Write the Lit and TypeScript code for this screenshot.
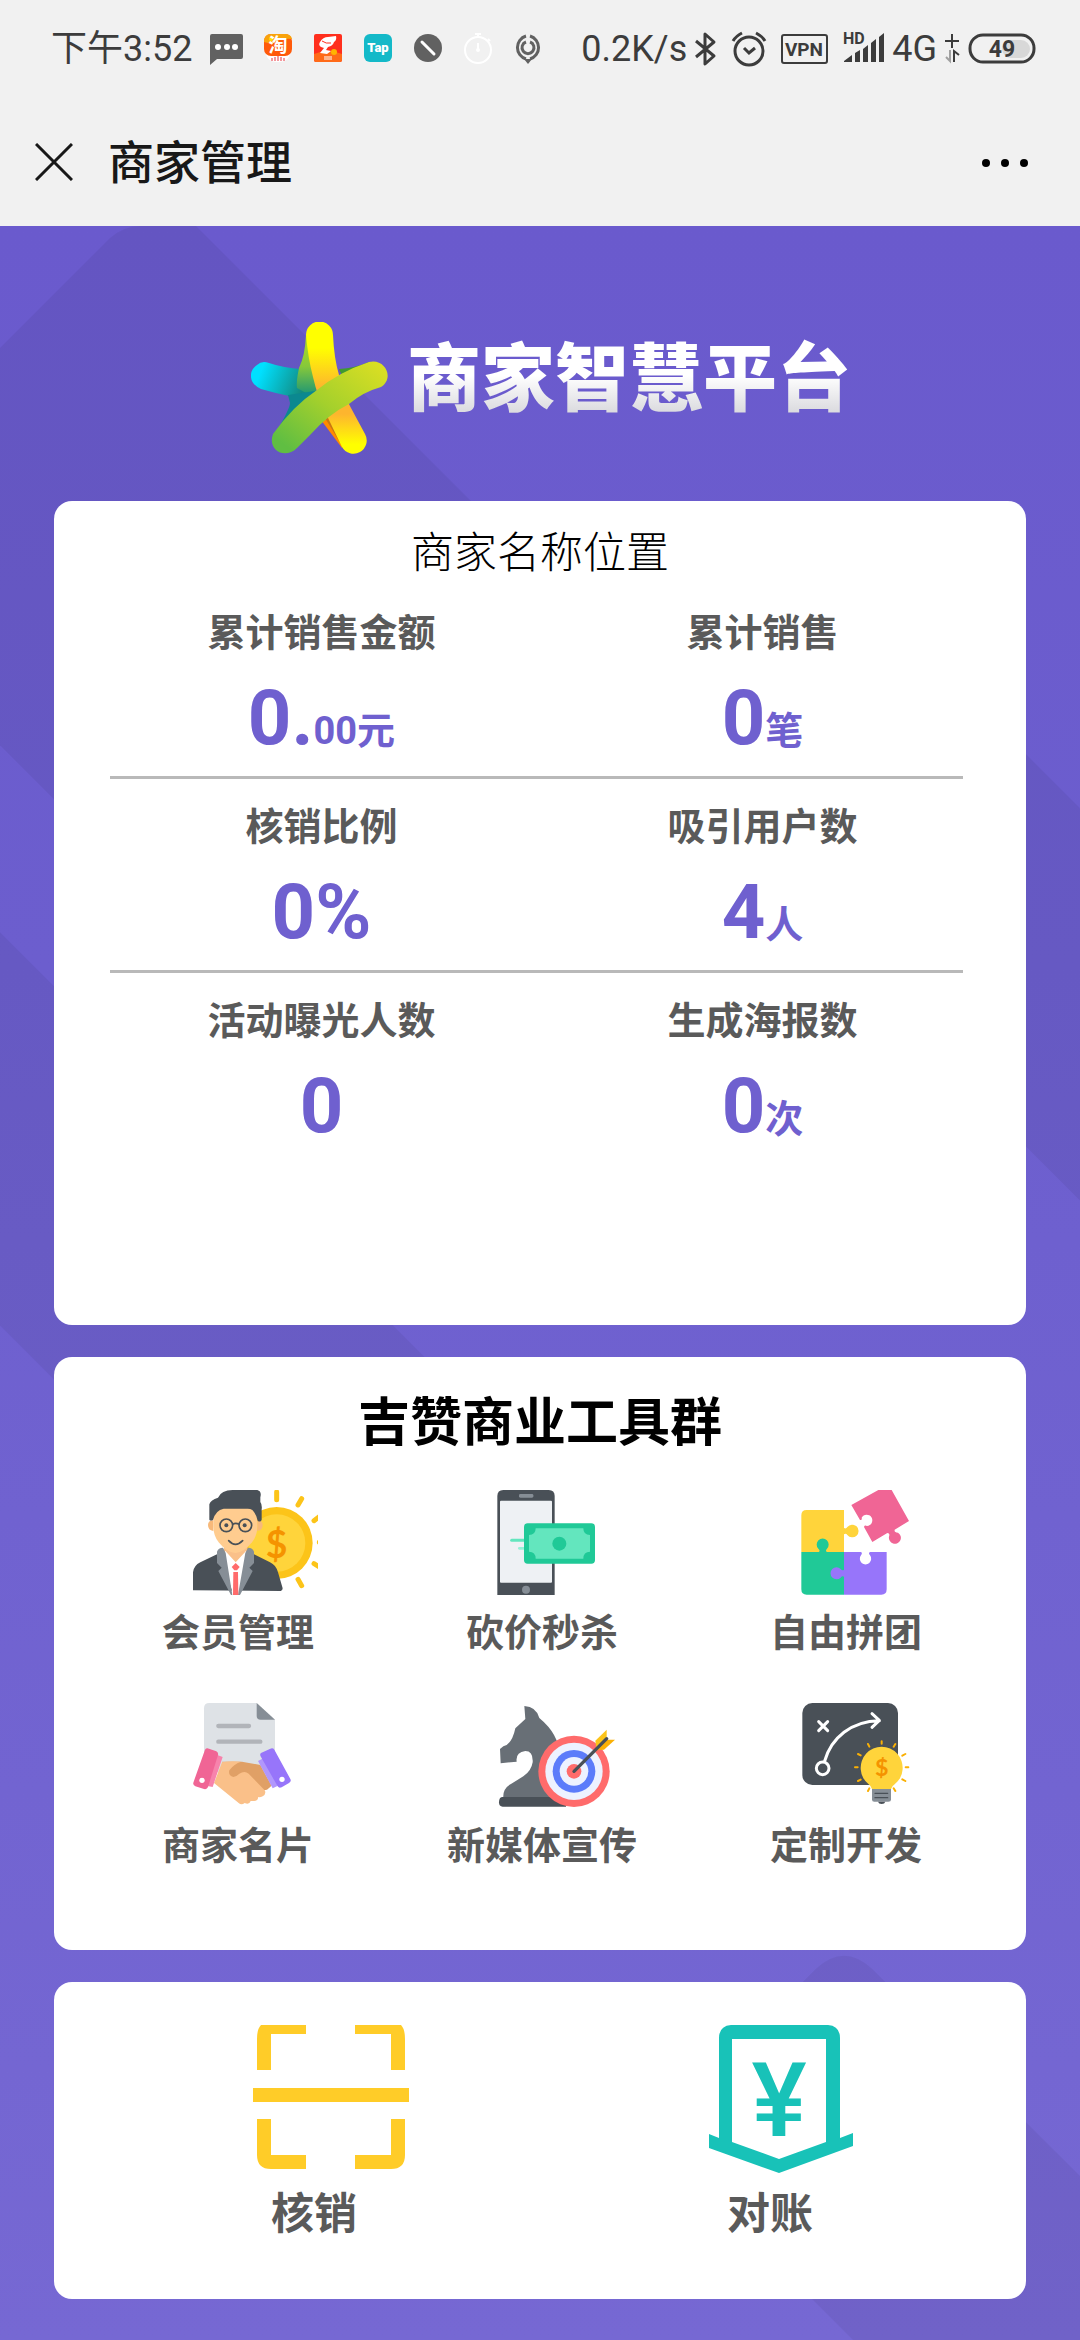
import { LitElement, html, svg, css } from "lit";
import type { SVGTemplateResult, TemplateResult } from "lit";
import { customElement, property } from "lit/decorators.js";

interface Stat {
  label: string;
  value: string;
  unit: string;
}

interface Action {
  label: string;
  icon: TemplateResult;
}

const STAT_ROWS: Stat[][] = [
  [
    { label: "累计销售金额", value: "0.", unit: "00元" },
    { label: "累计销售", value: "0", unit: "笔" },
  ],
  [
    { label: "核销比例", value: "0%", unit: "" },
    { label: "吸引用户数", value: "4", unit: "人" },
  ],
  [
    { label: "活动曝光人数", value: "0", unit: "" },
    { label: "生成海报数", value: "0", unit: "次" },
  ],
];

const dollar = (x: number, y: number, size: number): SVGTemplateResult =>
  svg`<text x=${x} y=${y} font-size=${size} font-family="Lato, Roboto, sans-serif" font-weight="700" fill="#f59300" text-anchor="middle">$</text>`;

const memberIcon = html`<svg viewBox="99 363 375 315" aria-hidden="true">
  <g stroke="#fcc419" stroke-width="15" stroke-linecap="round">
    <path d="M350 369V392M425 389L414 408M425 650L414 631M484 438L462 455M484 597L462 584M492 520H478" />
  </g>
  <circle cx="350" cy="522" r="108" fill="#fcc419" />
  <circle cx="350" cy="522" r="86" fill="#ffd43b" />
  ${dollar(350, 566, 112)}
  <path d="M144 468q0-14 16-14v32q-16-2-16-18zM308 468q0-14-16-14v32q16-2 16-18z" fill="#f7b97a" />
  <path d="M192 520h70v50l-35 30-35-30z" fill="#fac089" />
  <path d="M160 440q8-30 66-30t66 30v32q0 28-16 48-26 32-50 32t-50-32q-16-20-16-48z" fill="#ffcc8f" />
  <path d="M148 452V406q4-14 26-20 10-23 44-23h74q14 4 9 22v14q6 8 4 22l0 32q-4 8-12 2-4-20-16-32-6-4-14-4h-72q-24 4-32 34-8 4-11-1z" fill="#495057" />
  <g fill="none" stroke="#495057" stroke-width="5">
    <circle cx="199" cy="469" r="19" /><circle cx="256" cy="469" r="19" />
    <path d="M218 466q9-6 19 0" />
    <path d="M206 515q20 22 42 0" stroke-linecap="round" />
  </g>
  <circle cx="199" cy="469" r="6" fill="#495057" /><circle cx="254" cy="469" r="6" fill="#495057" />
  <path d="M99 664V610q2-20 22-30l50-24 56 50 55-50 48 24q18 8 24 30l14 48q0 6-6 8z" fill="#495057" />
  <path d="M196 546l31 34 31-34 10 20-34 112h-14l-36-112z" fill="#fff" />
  <path d="M171 548q4-12 18-12l8 16 20 126h-4l-38-72 10-10-14-14zM282 548q-4-12-18-12l-8 16-22 126h6l38-72-10-10 14-14z" fill="#868e96" />
  <path d="M227 582l12 12-8 10h-8l-8-10z" fill="#ff6b6b" />
  <path d="M220 609h14l1 69h-16z" fill="#ff6b6b" />
</svg>`;

const phoneIcon = html`<svg viewBox="171 93 375 315" aria-hidden="true">
  <path d="M190 93h136q18 0 18 18v297h-172V111q0-18 18-18z" fill="#495057" />
  <rect x="237" y="105" width="43" height="11" rx="4" fill="#868e96" />
  <rect x="180" y="125" width="156" height="246" rx="3" fill="#eef1f4" />
  <circle cx="258" cy="392" r="12" fill="#868e96" />
  <path d="M215 244h40" stroke="#63e6be" stroke-width="9" stroke-linecap="round" />
  <path d="M238 268h18" stroke="#96f2d7" stroke-width="8" stroke-linecap="round" />
  <rect x="252" y="193" width="213" height="121" rx="11" fill="#20c997" />
  <path d="M287 208h143q0 20 20 20v50q-20 0-20 21H287q0-21-20-21v-50q20 0 20-20z" fill="#63e6be" />
  <circle cx="358" cy="254" r="21" fill="#20c997" />
</svg>`;

const puzzleIcon = html`<svg viewBox="183 93 375 315" aria-hidden="true">
  <path d="M200 153h112v54q6 4 10-3a19 19 0 1 1 0 24q-4-6-10-2v53H184V169q0-16 16-16z" fill="#ffd43b" />
  <path d="M184 279h52q6-4-1-10a18 18 0 1 1 26 0q-6 6 0 10h51v128H200q-16 0-16-16z" fill="#20c997" />
  <path d="M312 279h52q4 6-1 10a17 17 0 1 0 27 0q-6-5-1-10h51v112q0 16-16 16H312v-54q-6-3-10 3a18 18 0 1 1 0-26q5 6 10 2z" fill="#9775fa" />
  <path d="M334 138L415 93h40l52 93-43 26q-2 8 10 9a18 18 0 1 1-27 12q4-11-5-11l-45 27-25-45q2-7 9-3a17 17 0 1 0-16-25q2 9-5 7z" fill="#f06595" />
</svg>`;

const dealIcon = html`<svg viewBox="99 72 375 315" aria-hidden="true">
  <path d="M148 72h142l55 50v158H132V88q0-16 16-16z" fill="#dee2e6" />
  <path d="M290 72l55 50h-43q-12 0-12-12z" fill="#868e96" />
  <path d="M175 141h92M175 188h126" stroke="#b1b4b9" stroke-width="13" stroke-linecap="round" />
  <path d="M186 248h60l55 10 34 62-14 12-60 10-60-60z" fill="#e0a066" />
  <path d="M186 250q26-6 58-2-22 6-36 26-4 16 12 20 8 0 18-10 16-10 28 0l48 50q6 10-6 18-8 4-14 2 2 14-22 12-4 12-18 6-10 8-18 0l-74-60z" fill="#fac089" />
  <path d="M170 227l18 7-30 90-16-3z" fill="#f783ac" />
  <path d="M135 212q4-6 12-3l22 8q7 4 5 11l-30 96q-3 8-12 6l-26-8q-8-4-6-11z" fill="#f06595" />
  <circle cx="126" cy="304" r="8" fill="#fff" />
  <path d="M294 246l16-8 44 82-16 8z" fill="#b197fc" />
  <path d="M303 222l28-13q8-3 12 3l48 88q4 7-4 12l-22 13q-8 4-12-3l-50-88q-5-8 0-12z" fill="#9775fa" />
  <circle cx="366" cy="301" r="8" fill="#fff" />
</svg>`;

const strategyIcon = html`<svg viewBox="171 732 375 315" aria-hidden="true">
  <path d="M190 1016q-2-28 24-42l36-22q24-16 28-42 2-34-22-34-30 4-26 32l-48 5-2-43 10-8q26-6 36-54l30-28-3-39q36 2 45 36 60 50 60 110v129z" fill="#686f76" />
  <path d="M188 1014h190v29H188q-11 0-11-13 0-16 11-16z" fill="#495057" />
  <circle cx="402" cy="937" r="107" fill="#ff6b6b" />
  <circle cx="402" cy="937" r="86" fill="#edf2ff" />
  <circle cx="402" cy="937" r="64" fill="#5c7cfa" />
  <circle cx="402" cy="937" r="43" fill="#edf2ff" />
  <circle cx="402" cy="937" r="22" fill="#ff6b6b" />
  <path d="M466 845l34-33v30l-30 32z" fill="#fcc419" />
  <path d="M500 842h25l-33 30-24 2z" fill="#fab005" />
  <path d="M402 937l98-98" stroke="#495057" stroke-width="10" stroke-linecap="round" />
</svg>`;

const customIcon = html`<svg viewBox="183 732 375 315" aria-hidden="true">
  <rect x="187" y="732" width="287" height="246" rx="30" fill="#495057" />
  <g fill="none" stroke="#fff" stroke-width="9" stroke-linecap="round" stroke-linejoin="round">
    <path d="M236 788l27 27M263 788l-27 27" />
    <circle cx="248" cy="928" r="19" />
    <path d="M254 906c20-70 80-120 164-121M396 764l22 20-22 21" />
  </g>
  <path d="M425 847v7M384 855l4 8M466 855l-5 8M354 885l8 4M496 885l-9 5M345 925h8M505 925h-8M354 966l8-4M496 966l-9-5M384 996l4-8M466 996l-5-8" stroke="#fab005" stroke-width="6" stroke-linecap="round" />
  <path d="M396 990q-2-8-10-14a63 63 0 1 1 78 0q-9 6-11 14z" fill="#ffd43b" />
  ${dollar(425, 952, 70)}
  <path d="M396 990h57v32q0 6-8 6h-42q-7 0-7-6z" fill="#868e96" />
  <path d="M414 1028h22q-2 7-11 7t-11-7z" fill="#495057" />
  <path d="M405 1003h38M405 1016h38" stroke="#495057" stroke-width="4" stroke-linecap="round" />
</svg>`;

const scanIcon = html`<svg viewBox="0 0 156 148" aria-hidden="true">
  <path
    d="M53 0H8Q4 4 4 14V45H18V9H53zM102 0H148Q152 4 152 14V45H138V9H102zM0 63H156V77H0zM4 94H18V130H53V144H18Q4 144 4 130zM152 94H138V130H102V144H138Q152 144 152 130z"
    fill="#ffcc28"
  />
</svg>`;

const billIcon = html`<svg viewBox="0 0 156 148" aria-hidden="true">
  <path
    fill-rule="evenodd"
    d="M22 0H119Q131 1 131 13V113L144 108V121L70 148L0 123V109L10 113V13Q10 1 22 0zM23 14V117L70 134L117 117V14z"
    fill="#18c2b8"
  />
  <text x="70" y="111" font-size="104" font-family="Roboto, sans-serif" font-weight="500" fill="#18c2b8" text-anchor="middle">¥</text>
</svg>`;

const TOOLS: Action[] = [
  { label: "会员管理", icon: memberIcon },
  { label: "砍价秒杀", icon: phoneIcon },
  { label: "自由拼团", icon: puzzleIcon },
  { label: "商家名片", icon: dealIcon },
  { label: "新媒体宣传", icon: strategyIcon },
  { label: "定制开发", icon: customIcon },
];

const SHORTCUTS: Action[] = [
  { label: "核销", icon: scanIcon },
  { label: "对账", icon: billIcon },
];

@customElement("status-bar")
class StatusBar extends LitElement {
  static styles = css`
    :host {
      display: flex;
      align-items: center;
      justify-content: space-between;
      height: 98px;
      padding: 0 44px 0 51px;
      color: #3c3c3c;
      font-size: 36px;
      line-height: 42px;
      white-space: nowrap;
    }
    .left,
    .right {
      display: flex;
      align-items: center;
    }
    .left {
      gap: 22px;
    }
    .right {
      gap: 8px;
    }
    svg {
      display: block;
      overflow: visible;
      height: 34px;
      font-family: Roboto, "Noto Sans CJK SC", sans-serif;
    }
    .app { width: 28px; }
    .bluetooth { width: 22px; margin-right: 7px; }
    .alarm { width: 34px; margin-right: 7px; }
    .vpn { width: 47px; margin-right: 7px; }
    .signal { width: 41px; }
    .data { width: 15px; }
    .battery { width: 68px; }
  `;

  render() {
    return html`
      <div class="left">
        <span>下午3:52</span>
        <svg class="app" viewBox="0 0 28 34" aria-hidden="true">
          <path d="M-4 4q0-2 2-2h29q2 0 2 2v21q0 2-2 2H3l-7 6z" fill="#616161" />
          <circle cx="4" cy="15" r="3" fill="#fff" /><circle cx="13" cy="15" r="3" fill="#fff" /><circle cx="21" cy="15" r="3" fill="#fff" />
        </svg>
        <svg class="app" viewBox="0 0 28 34" aria-hidden="true">
          <path d="M2 20h24q0 10-12 10T2 20z" fill="#fff" />
          <rect x="0" y="2" width="28" height="22" rx="7" fill="#ff5a0a" />
          <path d="M0 10q0-8 7-8h14q6 0 7 5Q14 6 8 12z" fill="#f9a30b" />
          <circle cx="7" cy="7" r="2" fill="#ffe100" />
          <text x="14" y="20" font-size="19" font-weight="700" text-anchor="middle" fill="#fff">淘</text>
          <path d="M8 26v3M11 25v4M14 24v5M17 25v4M20 26v3" stroke="#e8323c" stroke-width="1" />
        </svg>
        <svg class="app" viewBox="0 0 28 34" aria-hidden="true">
          <rect x="0" y="2" width="28" height="28" rx="2" fill="#ff2f1d" />
          <path d="M0 22q14-6 28 0v6q0 2-2 2H2q-2 0-2-2z" fill="#ff6a18" />
          <path d="M6 10q3-5 8-5l8-1q1 4-2 6-1 4-6 5l-2 3 5 1-4 3-7-1 4-5-3-1q-3-2-1-5z" fill="#fff" />
          <path d="M8 9q4 3 9 2" fill="none" stroke="#ff2f1d" stroke-width="1" />
          <circle cx="20" cy="20" r="3" fill="#ffb400" />
          <path d="M11 24v4M13 24v4M15 24v4M17 24v4" stroke="#fff" stroke-width="1" />
        </svg>
        <svg class="app" viewBox="0 0 28 34" aria-hidden="true">
          <rect x="0" y="2" width="28" height="28" rx="6" fill="#14b9c8" />
          <text x="14" y="20" font-size="13" font-weight="900" text-anchor="middle" fill="#fff">Tap</text>
        </svg>
        <svg class="app" viewBox="0 0 28 34" aria-hidden="true">
          <circle cx="14" cy="16" r="14" fill="#616161" />
          <path d="M8 10l12 12" stroke="#fff" stroke-width="3" stroke-linecap="round" />
        </svg>
        <svg class="app" viewBox="0 0 28 34" aria-hidden="true" fill="none" stroke="#fff" stroke-width="2">
          <circle cx="14" cy="18" r="13" />
          <path d="M11 2h6M14 2v3M24 7l2 2M14 11v7" />
          <circle cx="14" cy="18" r="1" fill="#fff" />
        </svg>
        <svg class="app" viewBox="0 0 28 34" aria-hidden="true" fill="none" stroke="#616161" stroke-width="3">
          <path d="M12 4A12 12 0 0 0 12 27M16 4A12 12 0 0 1 16 27" />
          <path d="M12 10A6 6 0 1 0 16 10" />
          <path d="M10 27h8l-4 5z" fill="#616161" stroke="none" />
        </svg>
      </div>
      <div class="right">
        <span>0.2K/s</span>
        <svg class="bluetooth" viewBox="0 0 22 34" aria-hidden="true" fill="none" stroke="#3c3c3c" stroke-width="3" stroke-linejoin="round">
          <path d="M1 9l18 15-9 8V2l9 8L1 25" />
        </svg>
        <svg class="alarm" viewBox="0 0 34 34" aria-hidden="true" fill="none" stroke="#3c3c3c" stroke-width="3">
          <circle cx="17" cy="19" r="14" />
          <path d="M12 16l5 5 6-5M1 9q3-5 9-8M33 9q-3-5-9-8" />
        </svg>
        <svg class="vpn" viewBox="0 0 47 34" aria-hidden="true">
          <rect x="1" y="3" width="45" height="28" rx="2" fill="none" stroke="#3c3c3c" stroke-width="2" />
          <text x="23" y="24" font-size="19" font-weight="700" text-anchor="middle" fill="#3c3c3c">VPN</text>
        </svg>
        <svg class="signal" viewBox="0 0 41 34" aria-hidden="true" fill="#3c3c3c">
          <text x="0" y="12" font-size="16" font-weight="700">HD</text>
          <path d="M1 29l8-6v7H1zM12 21l5-3v12h-5zM20 17l5-4v17h-5zM28 11l5-4v23h-5zM36 5l5-4v29h-5z" />
        </svg>
        <span>4G</span>
        <svg class="data" viewBox="0 0 15 34" aria-hidden="true" fill="none" stroke="#3c3c3c" stroke-width="2">
          <path d="M0 9h14M7 2v14M9 30V19l5 4" />
          <path d="M5 18v11l-4-4" stroke="#a0a0a0" />
        </svg>
        <svg class="battery" viewBox="0 0 68 34" aria-hidden="true">
          <rect x="34" y="8" width="28" height="18" rx="9" fill="#d8d8d8" />
          <rect x="2" y="3" width="64" height="27" rx="13" fill="none" stroke="#3c3c3c" stroke-width="3" />
          <text x="34" y="25" font-size="23" font-weight="700" text-anchor="middle" fill="#3c3c3c">49</text>
        </svg>
      </div>
    `;
  }
}

@customElement("brand-logo")
class BrandLogo extends LitElement {
  static styles = css`
    :host {
      display: flex;
      align-items: center;
      justify-content: center;
      gap: 18px;
    }
    .star {
      width: 138px;
      height: 132px;
      flex: none;
    }
    .name {
      margin: 0 0 16px;
      font-size: 74px;
      line-height: 88px;
      font-weight: 900;
      color: transparent;
      background: linear-gradient(#ffffff 45%, #dcdce0 85%);
      -webkit-background-clip: text;
      background-clip: text;
    }
  `;

  render() {
    return html`
      <svg class="star" viewBox="0 0 138 132" aria-hidden="true">
        <defs>
          <linearGradient id="cyan" x1="0" y1="0" x2="1" y2="0.3">
            <stop offset="0.2" stop-color="#00e0ff" /><stop offset="0.9" stop-color="#128a80" />
          </linearGradient>
          <linearGradient id="lime" x1="0" y1="0" x2="0" y2="1">
            <stop offset="0" stop-color="#b4dc20" /><stop offset="0.5" stop-color="#86c83a" /><stop offset="1" stop-color="#12907c" />
          </linearGradient>
          <linearGradient id="sun" x1="0" y1="0" x2="0" y2="1">
            <stop offset="0.2" stop-color="#ffff00" /><stop offset="0.5" stop-color="#fdb52e" />
            <stop offset="0.7" stop-color="#fdb52e" /><stop offset="0.93" stop-color="#ffff00" />
          </linearGradient>
          <linearGradient id="leaf" x1="1" y1="0" x2="0" y2="1">
            <stop offset="0" stop-color="#e0e022" /><stop offset="0.5" stop-color="#a4d02c" /><stop offset="0.9" stop-color="#60be42" />
          </linearGradient>
        </defs>
        <path d="M6 43Q11 38 18 41Q33 46 50 47L64 68L50 86L38 74Q24 71 10 67Q-1 62 0 52Q1 46 6 43z" fill="url(#cyan)" />
        <path d="M55 13Q54 34 48 46Q45 60 46 66L64 76L70 40z" fill="url(#lime)" />
        <path d="M37 73L64 69L62 84L27 107Q39 86 39 81z" fill="#0b8890" />
        <path d="M64 70L27 107L60 84z" fill="#087468" />
        <path d="M88 47Q104 46 118 40L94 60z" fill="#3f9a30" />
        <path d="M70 98L91 126L92 108L78 94z" fill="#ff8a00" />
        <path d="M74 96L93 127L92 105L80 92z" fill="#c97812" />
        <path d="M55 13A13 13 0 0 1 82 13Q83 36 88 53Q92 72 100 86L114 112A13 13 0 0 1 91 125L78 98Q66 74 62 55Q57 36 55 13z" fill="url(#sun)" />
        <path d="M118 40C134 36 144 56 130 65Q112 70 98 82Q78 92 60 112L46 126C34 138 16 128 22 112Q42 84 66 68Q88 50 118 40z" fill="url(#leaf)" />
      </svg>
      <h1 class="name">商家智慧平台</h1>
    `;
  }
}

@customElement("action-grid")
class ActionGrid extends LitElement {
  @property({ attribute: false }) items: Action[] = [];
  @property({ reflect: true }) size: "small" | "large" = "small";

  static styles = css`
    :host {
      display: grid;
      grid-template-columns: repeat(3, 1fr);
      row-gap: 43px;
      padding: 0 28px 0 32px;
    }
    :host([size="large"]) {
      grid-template-columns: repeat(2, 1fr);
    }
    .action {
      display: flex;
      flex-direction: column;
      align-items: center;
      gap: 11px;
      padding: 0;
      border: 0;
      background: none;
      color: #5a5a5a;
      font: inherit;
      font-size: 38px;
      line-height: 54px;
      font-weight: 700;
      white-space: nowrap;
    }
    .icon {
      padding-left: 34px;
    }
    .icon svg {
      display: block;
      width: 125px;
      height: 105px;
    }
    :host([size="large"]) .action {
      gap: 13px;
      font-size: 43px;
      line-height: 56px;
    }
    :host([size="large"]) .icon svg {
      width: 156px;
      height: 148px;
    }
  `;

  render() {
    return this.items.map(
      (item) => html`<button class="action" type="button">
        <span class="icon">${item.icon}</span>
        <span>${item.label}</span>
      </button>`,
    );
  }
}

@customElement("app-root")
class AppRoot extends LitElement {
  static styles = css`
    :host {
      display: flex;
      flex-direction: column;
      min-height: 100vh;
      font-family: Roboto, "Noto Sans CJK SC", sans-serif;
    }
    .top {
      background: #f1f1f1;
    }
    .nav {
      display: flex;
      align-items: center;
      height: 128px;
      padding: 0 51px 0 35px;
    }
    .nav-button {
      padding: 0;
      border: 0;
      background: none;
    }
    .nav-button svg {
      display: block;
      width: 38px;
      height: 38px;
    }
    .nav-button.more {
      margin-left: auto;
    }
    .nav-button.more svg {
      width: 48px;
    }
    .nav-title {
      margin: 2px 0 0 35px;
      color: #181818;
      font-size: 46px;
      line-height: 60px;
      font-weight: 500;
    }
    .page {
      position: relative;
      flex: 1;
      display: flex;
      flex-direction: column;
      gap: 32px;
      padding: 96px 5% 42px;
      background: linear-gradient(#6a5acd, #6c5ece 35%, #7668d3);
    }
    .backdrop {
      position: absolute;
      inset: 0;
      width: 100%;
      height: 100%;
    }
    .logo {
      position: relative;
      padding: 0 0 15px 22px;
    }
    .card {
      position: relative;
      border-radius: 18px;
      background: #ffffff;
    }
    .stats {
      padding: 20px 0 161px;
    }
    .shop {
      margin: 0;
      color: #000000;
      font-size: 43px;
      line-height: 64px;
      font-weight: 300;
      text-align: center;
    }
    .stat-row {
      display: grid;
      grid-template-columns: 1fr 1fr;
      margin: 0;
      padding: 20px 43px 18px 47px;
      text-align: center;
    }
    .divider {
      height: 3px;
      margin: 0 63px 0 56px;
      border: 0;
      background: #b9b9b9;
    }
    .stat-label {
      color: #5a5a5a;
      font-size: 38px;
      line-height: 56px;
      font-weight: 700;
    }
    .stat-value {
      margin: 17px 0 0;
      color: #6f60cf;
      font-size: 76px;
      line-height: 80px;
      font-weight: 700;
    }
    .unit {
      font-size: 38px;
      line-height: 38px;
    }
    .tools {
      padding: 34px 0 77px;
    }
    .tools-title {
      margin: 0 0 33px;
      color: #000000;
      font-size: 52px;
      line-height: 66px;
      font-weight: 700;
      text-align: center;
    }
    .shortcuts {
      padding: 43px 0 57px;
    }
  `;

  private renderRow(row: Stat[], index: number) {
    return html`
      ${index > 0 ? html`<hr class="divider" />` : ""}
      <dl class="stat-row">
        ${row.map(
          (stat) => html`<div>
            <dt class="stat-label">${stat.label}</dt>
            <dd class="stat-value">${stat.value}${stat.unit ? html`<span class="unit">${stat.unit}</span>` : ""}</dd>
          </div>`,
        )}
      </dl>
    `;
  }

  render() {
    return html`
      <header class="top">
        <status-bar></status-bar>
        <nav class="nav">
          <button class="nav-button" type="button" aria-label="关闭">
            <svg viewBox="0 0 38 38" aria-hidden="true">
              <path d="M1 1L37 37M37 1L1 37" stroke="#181818" stroke-width="3" />
            </svg>
          </button>
          <h2 class="nav-title">商家管理</h2>
          <button class="nav-button more" type="button" aria-label="更多">
            <svg viewBox="0 0 48 38" aria-hidden="true">
              <circle cx="5" cy="20" r="4" /><circle cx="24" cy="20" r="4" /><circle cx="43" cy="20" r="4" />
            </svg>
          </button>
        </nav>
      </header>
      <main class="page">
        <svg class="backdrop" viewBox="0 226 1080 2114" preserveAspectRatio="none" aria-hidden="true">
          <g fill="#000" fill-opacity="0.05">
            <path d="M0 348L110 238Q124 226 140 226H196L500 530V1245L0 745z" />
            <path d="M0 932L480 1412V1805L0 1325z" />
            <path d="M1080 808L1000 728V1120L1080 1200z" />
            <path d="M1080 2175L872 1968Q844 1942 816 1968L780 2004V2266L854 2340H1080z" />
          </g>
        </svg>
        <brand-logo class="logo"></brand-logo>
        <section class="card stats">
          <h2 class="shop">商家名称位置</h2>
          ${STAT_ROWS.map((row, index) => this.renderRow(row, index))}
        </section>
        <section class="card tools">
          <h2 class="tools-title">吉赞商业工具群</h2>
          <action-grid .items=${TOOLS}></action-grid>
        </section>
        <section class="card shortcuts">
          <action-grid size="large" .items=${SHORTCUTS}></action-grid>
        </section>
      </main>
    `;
  }
}
